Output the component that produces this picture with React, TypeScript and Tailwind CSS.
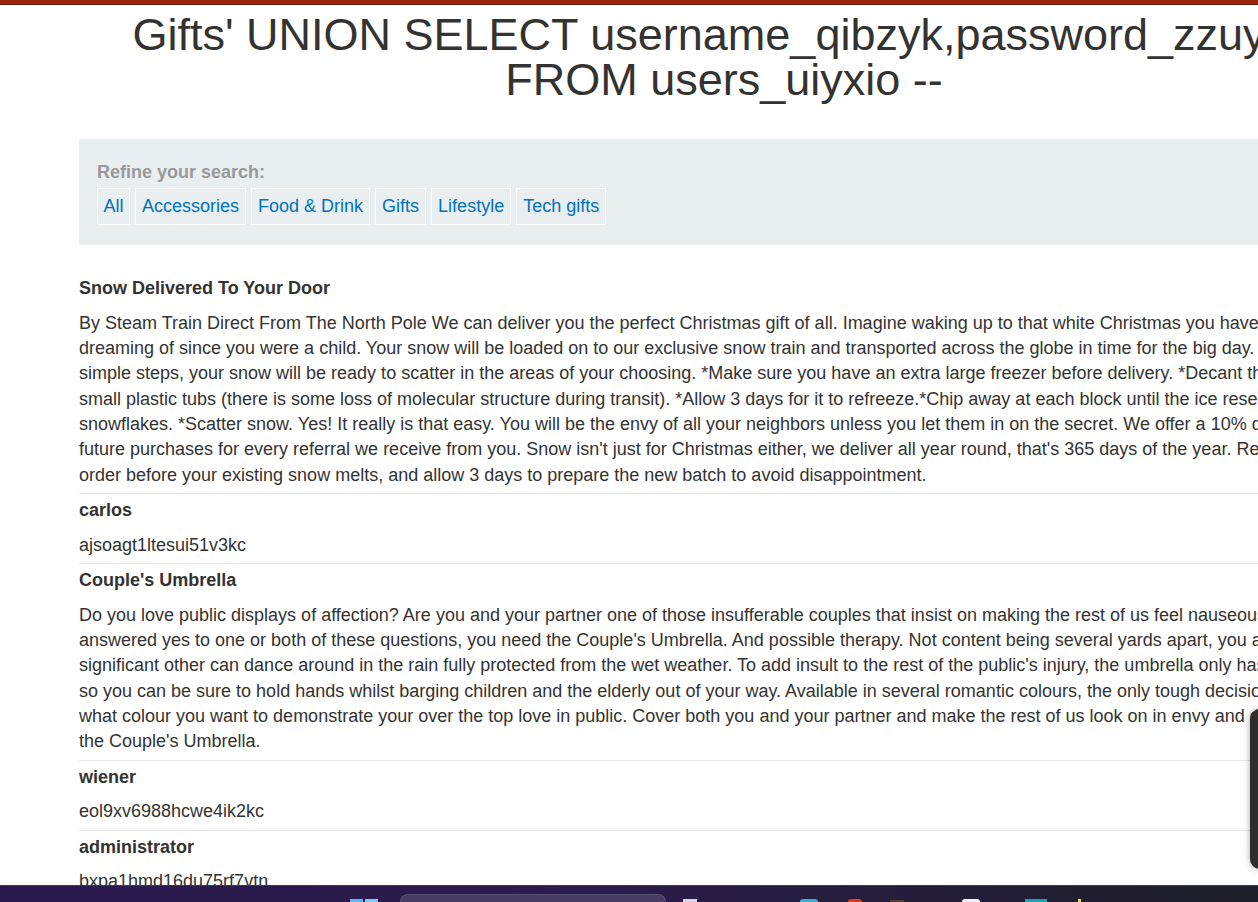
import React from "react";

const items: { kind: "title" | "body"; text: string }[] = [
  { kind: "title", text: "Snow Delivered To Your Door" },
  {
    kind: "body",
    text:
      "By Steam Train Direct From The North Pole We can deliver you the perfect Christmas gift of all. Imagine waking up to that white Christmas you have been dreaming of since you were a child. Your snow will be loaded on to our exclusive snow train and transported across the globe in time for the big day. In a few simple steps, your snow will be ready to scatter in the areas of your choosing. *Make sure you have an extra large freezer before delivery. *Decant the liquid into small plastic tubs (there is some loss of molecular structure during transit). *Allow 3 days for it to refreeze.*Chip away at each block until the ice resembles snowflakes. *Scatter snow. Yes! It really is that easy. You will be the envy of all your neighbors unless you let them in on the secret. We offer a 10% discount on future purchases for every referral we receive from you. Snow isn't just for Christmas either, we deliver all year round, that's 365 days of the year. Remember to order before your existing snow melts, and allow 3 days to prepare the new batch to avoid disappointment.",
  },
  { kind: "title", text: "carlos" },
  { kind: "body", text: "ajsoagt1ltesui51v3kc" },
  { kind: "title", text: "Couple's Umbrella" },
  {
    kind: "body",
    text:
      "Do you love public displays of affection? Are you and your partner one of those insufferable couples that insist on making the rest of us feel nauseous? If you answered yes to one or both of these questions, you need the Couple's Umbrella. And possible therapy. Not content being several yards apart, you and your significant other can dance around in the rain fully protected from the wet weather. To add insult to the rest of the public's injury, the umbrella only has one handle so you can be sure to hold hands whilst barging children and the elderly out of your way. Available in several romantic colours, the only tough decision will be what colour you want to demonstrate your over the top love in public. Cover both you and your partner and make the rest of us look on in envy and disgust with the Couple's Umbrella.",
  },
  { kind: "title", text: "wiener" },
  { kind: "body", text: "eol9xv6988hcwe4ik2kc" },
  { kind: "title", text: "administrator" },
  { kind: "body", text: "bxpa1hmd16du75rf7vtn" },
];

const filters = ["All", "Accessories", "Food & Drink", "Gifts", "Lifestyle", "Tech gifts"];

export default function App() {
  return (
    <div className="relative w-[1258px] h-[902px] overflow-hidden bg-white font-['Liberation_Sans',Arial,sans-serif] text-[#333332]">
      <div className="w-[1448px]">
        <div className="h-[5px] bg-[#9a260d] border-b border-[#6a1a08]" />
        <div className="px-[79px]">
          <h1 className="mt-[7px] text-center text-[45px] leading-[45px] font-normal">
            Gifts' UNION SELECT username_qibzyk,password_zzuyfxr FROM users_uiyxio --
          </h1>
          <section className="mt-[37px] bg-[#e9eef1] pt-[21px] pb-[20px] px-[18px]">
            <div className="text-[18px] leading-[25px] font-bold text-[#999999] mb-[3px]">
              Refine your search:
            </div>
            <div className="flex gap-[5px]">
              {filters.map((f, i) => (
                <a
                  key={f}
                  className={
                    i === 0
                      ? "border border-white px-[5.5px] h-[37px] flex items-center text-[18px] text-[#0071bc]"
                      : "border border-white px-[6px] h-[37px] flex items-center text-[18px] text-[#0071bc]"
                  }
                >
                  {f}
                </a>
              ))}
            </div>
          </section>
          <table className="mt-[27px] w-full border-collapse text-[18px] leading-[25.3px]">
            <tbody>
              {items.map((it, i) =>
                it.kind === "title" ? (
                  <tr key={i}>
                    <th className="text-left font-bold pt-[4px] pb-[4.5px] px-0">{it.text}</th>
                  </tr>
                ) : (
                  <tr key={i} className="border-b border-[#e6e6e6]">
                    <td className="pt-[5px] pb-[5px] px-0">{it.text}</td>
                  </tr>
                )
              )}
            </tbody>
          </table>
        </div>
      </div>

      {/* clipped dark popup at the right edge */}
      <div className="absolute left-[1250px] top-[709px] w-[40px] h-[160px] rounded-[10px] bg-[#2d2d2d] shadow-[0_0_6px_rgba(0,0,0,0.35)]" />

      {/* taskbar (overlays the page bottom) */}
      <div className="absolute left-0 right-0 bottom-0 h-[17px] border-t border-[#3d3555] bg-gradient-to-r from-[#2b1a4e] via-[#2a1c4a] to-[#1e1e28] flex items-end">
        <div className="ml-[350px] w-[28px] h-[3px] flex gap-[2px]">
          <div className="flex-1 bg-[#5ab4f5]" />
          <div className="flex-1 bg-[#7cc7fb]" />
        </div>
        <div className="ml-[22px] w-[266px] h-[8px] rounded-t-[10px] bg-[#463b63] border border-b-0 border-[#5a4f78]" />
        <div className="ml-[17px] w-[14px] h-[3px] bg-[#d8d8e0]" />
        <div className="ml-[103px] w-[18px] h-[3px] rounded-t-full bg-[#2fb3d8]" />
        <div className="ml-[30px] w-[14px] h-[3px] rounded-t-full bg-[#e8371e]" />
        <div className="ml-[28px] w-[14px] h-[2px] bg-[#5a3a2a]" />
        <div className="ml-[58px] w-[18px] h-[3px] rounded-t-full bg-[#f2f2f2]" />
        <div className="ml-[45px] w-[22px] h-[3px] bg-[#14a3b8]" />
        <div className="ml-[31px] w-[3px] h-[3px] bg-[#f3d33a]" />
      </div>
    </div>
  );
}
